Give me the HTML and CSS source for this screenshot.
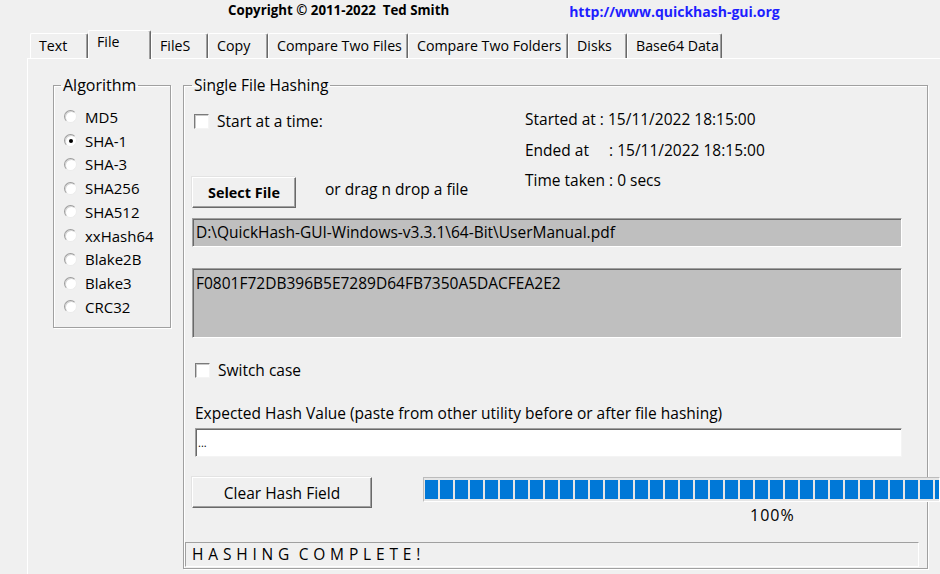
FILE: index.html
```html
<!DOCTYPE html>
<html>
<head>
<meta charset="utf-8">
<title>QuickHash GUI</title>
<link rel="stylesheet" href="styles.css">
</head>
<body>
<div class="window">
  <header class="header">
    <span class="copyright">Copyright © 2011-2022  Ted Smith</span>
    <span class="link">http://www.quickhash-gui.org</span>
  </header>
  <nav class="tabs">
    <div class="tab w-text">Text</div>
    <div class="tab active w-file">File</div>
    <div class="tab w-files">FileS</div>
    <div class="tab w-copy">Copy</div>
    <div class="tab w-ctf">Compare Two Files</div>
    <div class="tab w-ctfo">Compare Two Folders</div>
    <div class="tab w-disks">Disks</div>
    <div class="tab w-b64">Base64 Data</div>
  </nav>
  <main class="panel">
    <fieldset class="group algo">
      <legend>Algorithm</legend>
      <div class="radio-list">
        <div class="radio"><span class="rb"></span>MD5</div>
        <div class="radio"><span class="rb checked"></span>SHA-1</div>
        <div class="radio"><span class="rb"></span>SHA-3</div>
        <div class="radio"><span class="rb"></span>SHA256</div>
        <div class="radio"><span class="rb"></span>SHA512</div>
        <div class="radio"><span class="rb"></span>xxHash64</div>
        <div class="radio"><span class="rb"></span>Blake2B</div>
        <div class="radio"><span class="rb"></span>Blake3</div>
        <div class="radio"><span class="rb"></span>CRC32</div>
      </div>
    </fieldset>
    <fieldset class="group hashing">
      <legend>Single File Hashing</legend>
      <div class="top">
        <div class="left-col">
          <div class="check start"><span class="cb"></span>Start at a time:</div>
          <div class="select-row">
            <button class="btn btn-select">Select File</button>
            <span class="drag">or drag n drop a file</span>
          </div>
        </div>
        <div class="times">
          <div class="tline">Started at : 15/11/2022 18:15:00</div>
          <div class="tline">Ended at     : 15/11/2022 18:15:00</div>
          <div class="tline">Time taken : 0 secs</div>
        </div>
      </div>
      <div class="field path">D:\QuickHash-GUI-Windows-v3.3.1\64-Bit\UserManual.pdf</div>
      <div class="field hash">F0801F72DB396B5E7289D64FB7350A5DACFEA2E2</div>
      <div class="check switch"><span class="cb"></span>Switch case</div>
      <div class="expected-label">Expected Hash Value (paste from other utility before or after file hashing)</div>
      <div class="input">...</div>
      <div class="bottom">
        <button class="btn btn-clear">Clear Hash Field</button>
        <div class="progress-wrap">
          <div class="progress"></div>
          <div class="pct">100%</div>
        </div>
      </div>
      <div class="status">H A S H I N G  C O M P L E T E !</div>
    </fieldset>
  </main>
</div>
</body>
</html>
```

FILE: styles.css
```css
* { box-sizing: border-box; }
html, body { margin: 0; padding: 0; }
body {
  background: #f0f0f0;
  font-family: "Open Sans", "Noto Sans", sans-serif;
  font-size: 15.5px;
  color: #000;
  overflow: hidden;
}
.window {
  width: 940px;
  height: 574px;
  display: flex;
  flex-direction: column;
  overflow: hidden;
}

/* header */
.header {
  height: 30px;
  display: flex;
  align-items: flex-start;
  font-weight: bold;
  line-height: 18px;
  white-space: pre;
}
.copyright { margin-left: 228px; margin-top: 1px; font-size: 13.3px; }
.link { margin-left: 120px; margin-top: 3px; color: #1e1eff; font-size: 14px; }

/* tabs */
.tabs {
  height: 28px;
  display: flex;
  align-items: flex-end;
  padding-left: 30px;
  font-size: 14.2px;
}
.tab {
  flex: none;
  height: 25px;
  line-height: 23px;
  padding-left: 8px;
  white-space: nowrap;
  border-top: 1px solid #fff;
  border-left: 1px solid #fff;
  border-right: 1px solid #696969;
  box-shadow: inset -1px 0 0 #a0a0a0;
  border-radius: 2px 2px 0 0;
}
.tab.active {
  height: 29px;
  line-height: 22px;
  margin-bottom: -1px;
  position: relative;
  z-index: 1;
  background: #f0f0f0;
}
.w-text { width: 58px; }
.w-file { width: 63px; }
.w-files { width: 57px; }
.w-copy { width: 60px; }
.w-ctf { width: 140px; }
.w-ctfo { width: 160px; }
.w-disks { width: 59px; }
.w-b64 { width: 95px; }

/* panel */
.panel {
  flex: 1;
  margin-left: 27px;
  border-top: 1px solid #fff;
  border-left: 1px solid #fff;
  display: flex;
  align-items: flex-start;
  padding: 17px 0 0 25px;
}

.group {
  flex: none;
  margin: 0;
  padding: 0;
  min-width: 0;
  border: 1px solid #a0a0a0;
  box-shadow: 1px 1px 0 #fff, inset 1px 1px 0 #fff;
}
.group legend {
  margin-left: 8px;
  padding: 0 2px;
  line-height: 18px;
}
.algo legend { margin-left: 7px; font-size: 16px; }

/* algorithm */
.algo { width: 118px; height: 252px; font-size: 15px; }
.radio-list { padding-top: 11px; }
.radio {
  height: 23.75px;
  display: flex;
  align-items: center;
}
.rb {
  width: 13px;
  height: 13px;
  border-radius: 50%;
  margin-left: 10px;
  margin-right: 8px;
  background: #fff;
  border: 1px solid;
  border-color: #9c9c9c #ececec #ececec #9c9c9c;
  box-shadow: inset 1px 1px 0 #d6d6d6;
  display: flex;
  align-items: center;
  justify-content: center;
  flex: none;
}
.rb.checked::after {
  content: "";
  width: 4px;
  height: 4px;
  border-radius: 50%;
  background: #000;
}

/* hashing */
.hashing { width: 745px; height: 493px; margin-left: 12px; }
.top { display: flex; height: 114px; }
.left-col { flex: none; width: 333px; margin-left: 8px; }
.check {
  height: 18px;
  line-height: 18px;
  display: flex;
  align-items: center;
}
.cb {
  width: 15px;
  height: 15px;
  background: #fff;
  border: 1px solid;
  border-color: #7a7a7a #f4f4f4 #f4f4f4 #7a7a7a;
  box-shadow: inset 1px 1px 0 #c8c8c8;
  margin-right: 8px;
  flex: none;
}
.start { margin-top: 18px; margin-left: 2px; }
.select-row { display: flex; align-items: flex-start; margin-top: 47px; }
.btn {
  flex: none;
  font: inherit;
  color: #000;
  background: #f0f0f0;
  height: 31px;
  border: 1px solid;
  border-color: #fff #696969 #696969 #fff;
  box-shadow: inset -1px -1px 0 #a0a0a0, -1px -1px 0 #e3e3e3;
  padding: 0;
}
.btn-select { width: 104px; font-weight: bold; font-size: 14.4px; }
.drag { margin-left: 29px; margin-top: 3px; line-height: 18px; white-space: nowrap; }
.times { margin-top: 10px; }
.tline { line-height: 30.5px; white-space: pre; }

.field {
  margin-left: 8px;
  width: 710px;
  background: #bfbfbf;
  border-top: 1px solid #a0a0a0;
  border-left: 1px solid #a0a0a0;
  border-right: 1px solid #fff;
  border-bottom: 1px solid #fff;
  box-shadow: inset 1px 1px 0 #696969;
  padding-left: 3px;
  white-space: nowrap;
}
.path { margin-top: 10px; height: 29px; line-height: 27px; }
.hash { margin-top: 21px; height: 70px; padding-top: 5px; line-height: 18px; }
.switch { margin-top: 23px; margin-left: 11px; }
.expected-label { margin-top: 25px; margin-left: 11px; line-height: 18px; white-space: nowrap; }
.input {
  margin-top: 6px;
  margin-left: 11px;
  width: 707px;
  height: 29px;
  line-height: 27px;
  background: #fff;
  border-top: 1px solid #a0a0a0;
  border-left: 1px solid #a0a0a0;
  border-right: 1px solid #f4f4f4;
  border-bottom: 1px solid #f4f4f4;
  box-shadow: inset 1px 1px 0 #696969;
  padding-left: 2px;
  font-size: 11px;
}

.bottom { display: flex; align-items: flex-start; margin-top: 20px; margin-left: 8px; }
.btn-clear { width: 180px; }
.progress-wrap { flex: none; margin-left: 51px; }
.progress {
  width: 517px;
  height: 25px;
  border-top: 1px solid #bcbcbc;
  border-left: 1px solid #bcbcbc;
  border-bottom: 1px solid #fff;
  border-right: 1px solid #fff;
  padding: 2px 0 2px 1px;
  background: #e6e6e6;
}
.progress::before {
  content: "";
  display: block;
  height: 100%;
  background: repeating-linear-gradient(90deg, #0078d7 0 13px, #e6e6e6 13px 15px);
}
.pct { margin-top: 4px; margin-left: 327px; line-height: 18px; font-size: 16px; letter-spacing: 1px; }

.status {
  margin-top: 18px;
  margin-left: 1px;
  width: 734px;
  height: 25px;
  line-height: 23px;
  padding-left: 6px;
  letter-spacing: 0.4px;
  border-top: 1px solid #a0a0a0;
  border-left: 1px solid #a0a0a0;
  border-right: 1px solid #fff;
  border-bottom: 1px solid #fff;
  white-space: pre;
}
```
